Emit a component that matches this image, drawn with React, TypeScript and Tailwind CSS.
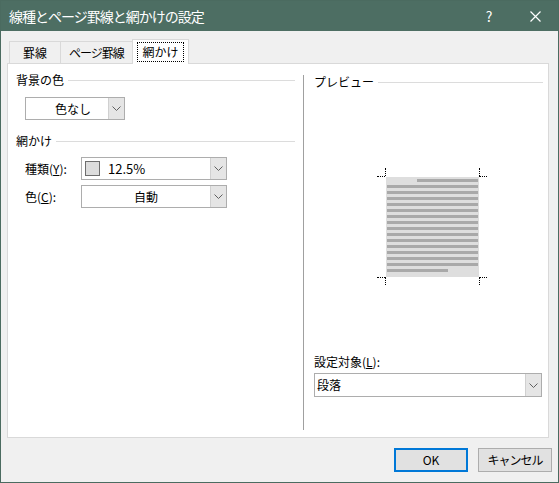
import React from 'react';

const Chevron: React.FC = () => (
  <svg width="9" height="5" viewBox="0 0 9 5" fill="none">
    <path d="M0.5 0.5 L4.5 4.5 L8.5 0.5" stroke="#606060" strokeWidth="1" />
  </svg>
);

const Combo: React.FC<{ className: string; center?: boolean; children: React.ReactNode }> = ({ className, center, children }) => (
  <div className={`flex border border-[#adadad] bg-white ${className}`}>
    <div className={`flex-1 flex items-center ${center ? 'justify-center' : ''}`}>{children}</div>
    <div className="w-[16px] flex items-center justify-center bg-[#e5e5e5] border-l border-[#d0d0d0]">
      <Chevron />
    </div>
  </div>
);

const Heading: React.FC<{ label: string }> = ({ label }) => (
  <div className="flex items-center gap-[4px] h-[16px]">
    <span className="leading-[16px]">{label}</span>
    <div className="flex-1 h-px bg-[#dcdcdc]" />
  </div>
);

const Corner: React.FC<{ pos: string; h: string; v: string }> = ({ pos, h, v }) => (
  <div className={`absolute ${pos}`}>
    <div className={`absolute w-[8px] h-0 border-t border-dotted border-black ${h}`} />
    <div className={`absolute h-[8px] w-0 border-l border-dotted border-black ${v}`} />
  </div>
);

export default function App() {
  const lines = Array.from({ length: 16 });

  return (
    <div className="w-[559px] h-[483px] flex flex-col bg-[#f0f0f0] border border-[#4b6b60] text-[12px] text-black font-['Noto_Sans_CJK_JP',sans-serif]">
      {/* title bar */}
      <div className="h-[30px] bg-[#4d6e63] flex items-center text-white shrink-0">
        <div className="pl-[8px] text-[14px] tracking-[-1px] flex-1">線種とページ罫線と網かけの設定</div>
        <div className="w-[46px] flex justify-center text-[14px] mr-[0px]">?</div>
        <div className="w-[46px] flex justify-center mr-[0px]">
          <svg width="11" height="11" viewBox="0 0 11 11">
            <path d="M0.5 0.5 L10.5 10.5 M10.5 0.5 L0.5 10.5" stroke="#ffffff" strokeWidth="1.2" />
          </svg>
        </div>
      </div>

      {/* tabs */}
      <div className="h-[32px] flex items-end pl-[8px] shrink-0">
        <div className="h-[22px] w-[52px] flex items-center justify-center border border-b-0 border-[#d9d9d9] bg-[#f0f0f0]">罫線</div>
        <div className="h-[22px] w-[73px] -ml-px flex items-center justify-center border border-b-0 border-[#d9d9d9] bg-[#f0f0f0] tracking-[-1px]">ページ罫線</div>
        <div className="h-[25px] w-[57px] -ml-px -mb-px relative z-10 flex items-center justify-center border border-b-0 border-[#d9d9d9] bg-white">
          <div className="border border-dotted border-black px-[4px] h-[20px] leading-[18px] w-[47px] text-center">網かけ</div>
        </div>
      </div>

      {/* panel */}
      <div className="ml-[6px] w-[542px] h-[375px] border border-[#d9d9d9] bg-white flex shrink-0">
        {/* left column */}
        <div className="w-[295px] pl-[8px] pr-[8px] pt-[8px] flex flex-col">
          <Heading label="背景の色" />
          <Combo className="ml-[9px] mt-[9px] w-[100px] h-[23px]" center>
            <span className="pl-[12px]">色なし</span>
          </Combo>
          <div className="mt-[13px]">
            <Heading label="網かけ" />
          </div>
          <div className="flex items-center mt-[8px] ml-[9px]">
            <span className="w-[56px]">
              種類(<span className="underline">Y</span>):
            </span>
            <Combo className="w-[146px] h-[23px]">
              <div className="ml-[3px] w-[15px] h-[15px] border border-[#6d6d6d] bg-[#dcdcdc]" />
              <span className="ml-[8px] text-[13px]">12.5%</span>
            </Combo>
          </div>
          <div className="flex items-center mt-[5px] ml-[9px]">
            <span className="w-[56px]">
              色(<span className="underline">C</span>):
            </span>
            <Combo className="w-[146px] h-[23px]" center>
              <span>自動</span>
            </Combo>
          </div>
        </div>

        {/* separator */}
        <div className="w-px bg-[#a0a0a0] mt-[11px] h-[355px]" />

        {/* right column */}
        <div className="flex-1 pl-[10px] pr-[5px] pt-[10px] flex flex-col">
          <Heading label="プレビュー" />
          <div className="relative ml-[72px] mt-[87px] w-[93px] h-[100px] bg-[#dedede] pt-[2px] px-px flex flex-col gap-[3px]">
            {lines.map((_, i) => (
              <div
                key={i}
                className={`h-[3px] bg-[#a9a9a9] ${i === 0 ? 'ml-[30px]' : ''} ${i === 15 ? 'w-[61px]' : ''}`}
              />
            ))}
            <Corner pos="left-0 top-0" h="-left-[9px] -top-px" v="-left-px -top-[9px]" />
            <Corner pos="right-0 top-0" h="left-0 -top-px" v="left-0 -top-[9px]" />
            <Corner pos="left-0 bottom-0" h="-left-[9px] top-0" v="-left-px top-0" />
            <Corner pos="right-0 bottom-0" h="left-0 top-0" v="left-0 top-0" />
          </div>
          <div className="mt-[77px] leading-[16px]">
            設定対象(<span className="underline">L</span>):
          </div>
          <Combo className="mt-[3px] w-[228px] h-[24px]">
            <span className="pl-[2px]">段落</span>
          </Combo>
        </div>
      </div>

      {/* buttons */}
      <div className="flex justify-end gap-[10px] pr-[6px] mt-[10px]">
        <button className="w-[74px] h-[24px] bg-[#e1e1e1] border-2 border-[#0078d7] flex items-center justify-center">OK</button>
        <button className="w-[74px] h-[24px] bg-[#e1e1e1] border border-[#adadad] flex items-center justify-center tracking-[-1px]">キャンセル</button>
      </div>
    </div>
  );
}
